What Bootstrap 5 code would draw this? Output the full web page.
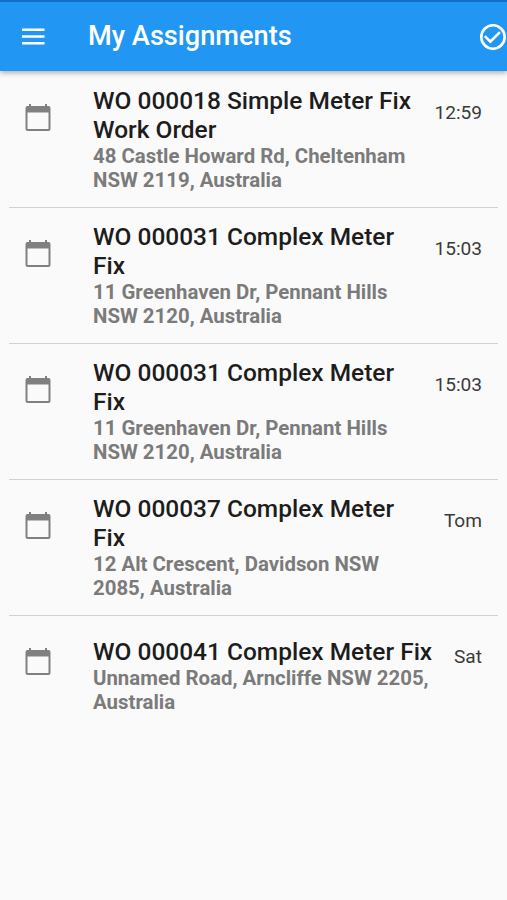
<!DOCTYPE html>
<html lang="en">
<head>
<meta charset="utf-8">
<meta name="viewport" content="width=device-width, initial-scale=1">
<title>My Assignments</title>
<link href="https://cdn.jsdelivr.net/npm/bootstrap@5.3.0/dist/css/bootstrap.min.css" rel="stylesheet">
<style>
body{font-family:Roboto,"Liberation Sans",sans-serif;background:#fafafa;color:#1d1d1d;height:900px;overflow:hidden}
.app-bar{height:71px;background:#2196f3;border-top:2px solid #1470c4;padding:0 1px 0 22px;box-shadow:0 2px 5px rgba(0,0,0,.3)}
.app-title{font-size:27.2px;font-weight:500;line-height:30px;margin:-1px 0 0 43px}
.job-list{padding:1px 9px 0}
.job{height:136px;border-bottom:1px solid #d2d2d2;padding:14px 16px 0 16px}
.job:last-child{border:0;padding-top:21px}
.job-icon{width:26px;height:28px;margin-top:18px;fill:#808080}
.job:last-child .job-icon{margin-top:11px}
.job-text{margin-left:42px}
.job-title{font-size:24.48px;font-weight:500;line-height:29px}
.job-place{font-size:20.4px;font-weight:700;line-height:23.5px;color:#7b7b7b;padding-top:1px}
.job-time{font-size:19.1px;line-height:24px;color:#3a3a3a;margin-top:15px}
.job:last-child .job-time{margin-top:8px}
</style>
</head>
<body>
<header class="app-bar d-flex align-items-center text-white">
<svg width="23" height="17" viewBox="0 0 23 17" fill="currentColor" class="flex-shrink-0"><path d="M0 .5h22.500v2.500H0zm0 6.700h22.500v2.500H0zm0 6.700h22.500v2.500H0z"/></svg>
<h1 class="app-title">My Assignments</h1>
<svg width="26" height="26" viewBox="2 2 20 20" fill="currentColor" class="ms-auto flex-shrink-0"><path d="M16.59 7.58 10 14.17l-3.59-3.58L5 12l5 5 8-8zM12 2a10 10 0 1 0 0 20 10 10 0 0 0 0-20zm0 18a8 8 0 1 1 0-16 8 8 0 0 1 0 16z"/></svg>
</header>
<main class="job-list">
<article class="job d-flex align-items-start"><svg class="job-icon flex-shrink-0" viewBox="0 0 26 28"><path fill-rule="evenodd" d="M4 0h2v2h14V0h2v2h1.500a2 2 0 0 1 2 2V25a2 2 0 0 1-2 2h-21a2 2 0 0 1-2-2V4a2 2 0 0 1 2-2H4zM2.500 8.500v16.500h21V8.500z"/></svg><div class="job-text"><div class="job-title text-nowrap">WO 000018 Simple Meter Fix<br>Work Order</div><div class="job-place text-nowrap">48 Castle Howard Rd, Cheltenham<br>NSW 2119, Australia</div></div><time class="job-time ms-auto">12:59</time></article>
<article class="job d-flex align-items-start"><svg class="job-icon flex-shrink-0" viewBox="0 0 26 28"><path fill-rule="evenodd" d="M4 0h2v2h14V0h2v2h1.500a2 2 0 0 1 2 2V25a2 2 0 0 1-2 2h-21a2 2 0 0 1-2-2V4a2 2 0 0 1 2-2H4zM2.500 8.500v16.500h21V8.500z"/></svg><div class="job-text"><div class="job-title text-nowrap">WO 000031 Complex Meter<br>Fix</div><div class="job-place text-nowrap">11 Greenhaven Dr, Pennant Hills<br>NSW 2120, Australia</div></div><time class="job-time ms-auto">15:03</time></article>
<article class="job d-flex align-items-start"><svg class="job-icon flex-shrink-0" viewBox="0 0 26 28"><path fill-rule="evenodd" d="M4 0h2v2h14V0h2v2h1.500a2 2 0 0 1 2 2V25a2 2 0 0 1-2 2h-21a2 2 0 0 1-2-2V4a2 2 0 0 1 2-2H4zM2.500 8.500v16.500h21V8.500z"/></svg><div class="job-text"><div class="job-title text-nowrap">WO 000031 Complex Meter<br>Fix</div><div class="job-place text-nowrap">11 Greenhaven Dr, Pennant Hills<br>NSW 2120, Australia</div></div><time class="job-time ms-auto">15:03</time></article>
<article class="job d-flex align-items-start"><svg class="job-icon flex-shrink-0" viewBox="0 0 26 28"><path fill-rule="evenodd" d="M4 0h2v2h14V0h2v2h1.500a2 2 0 0 1 2 2V25a2 2 0 0 1-2 2h-21a2 2 0 0 1-2-2V4a2 2 0 0 1 2-2H4zM2.500 8.500v16.500h21V8.500z"/></svg><div class="job-text"><div class="job-title text-nowrap">WO 000037 Complex Meter<br>Fix</div><div class="job-place text-nowrap">12 Alt Crescent, Davidson NSW<br>2085, Australia</div></div><time class="job-time ms-auto">Tom</time></article>
<article class="job d-flex align-items-start"><svg class="job-icon flex-shrink-0" viewBox="0 0 26 28"><path fill-rule="evenodd" d="M4 0h2v2h14V0h2v2h1.500a2 2 0 0 1 2 2V25a2 2 0 0 1-2 2h-21a2 2 0 0 1-2-2V4a2 2 0 0 1 2-2H4zM2.500 8.500v16.500h21V8.500z"/></svg><div class="job-text"><div class="job-title text-nowrap">WO 000041 Complex Meter Fix</div><div class="job-place text-nowrap">Unnamed Road, Arncliffe NSW 2205,<br>Australia</div></div><time class="job-time ms-auto">Sat</time></article>
</main>
<script src="https://cdn.jsdelivr.net/npm/bootstrap@5.3.0/dist/js/bootstrap.bundle.min.js"></script>
</body>
</html>
